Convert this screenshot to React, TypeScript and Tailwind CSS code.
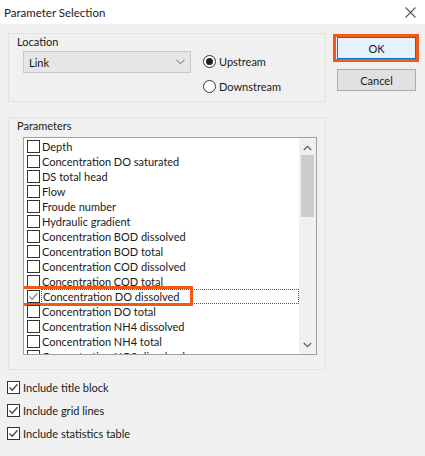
import React from "react";

const params = [
  "Depth",
  "Concentration DO saturated",
  "DS total head",
  "Flow",
  "Froude number",
  "Hydraulic gradient",
  "Concentration BOD dissolved",
  "Concentration BOD total",
  "Concentration COD dissolved",
  "Concentration COD total",
  "Concentration DO dissolved",
  "Concentration DO total",
  "Concentration NH4 dissolved",
  "Concentration NH4 total",
  "Concentration NO3 dissolved",
];

function CheckBox({ checked, dim }: { checked?: boolean; dim?: boolean }) {
  return (
    <span className="flex h-[13px] w-[13px] shrink-0 items-center justify-center border border-[#333] bg-white">
      {checked && (
        <svg width="11" height="11" viewBox="0 0 11 11">
          <path d="M1.5 5.5 L4.2 8.2 L9.5 2.2" fill="none" stroke={dim ? "#8a8a8a" : "#444"} strokeWidth="1.3" />
        </svg>
      )}
    </span>
  );
}

function Radio({ checked }: { checked?: boolean }) {
  return (
    <span className="flex h-[13px] w-[13px] shrink-0 items-center justify-center rounded-full border border-[#333] bg-white">
      {checked && <span className="h-[7px] w-[7px] rounded-full bg-[#222]" />}
    </span>
  );
}

export default function App() {
  return (
    <div
      className="h-[456px] w-[425px] overflow-hidden bg-[#f0f0f0] text-[11px] leading-[15px] text-[#1a1a1a]"
      style={{ fontFamily: "Lato, 'Noto Sans', sans-serif" }}
    >
      <div className="flex h-[24px] items-center justify-between bg-white pl-[4px] pr-[9px]">
        <span className="text-[11.5px]">Parameter Selection</span>
        <svg width="11" height="11" viewBox="0 0 11 11">
          <path d="M0.5 0.5 L10.5 10.5 M10.5 0.5 L0.5 10.5" stroke="#555" strokeWidth="1.1" />
        </svg>
      </div>

      <div className="flex">
        <div className="ml-[8px] w-[318px]">
          <div className="mt-[9px] h-[69px] border border-[#e2e2e2] pl-[8px]">
            <div>Location</div>
            <div className="mt-[2px] flex items-start">
              <div className="ml-[6px] flex h-[22px] w-[168px] items-center justify-between border border-[#c8c8c8] bg-[#e6e6e6] pl-[5px] pr-[5px]">
                <span>Link</span>
                <svg width="9" height="6" viewBox="0 0 9 6">
                  <path d="M0.5 0.8 L4.5 4.8 L8.5 0.8" fill="none" stroke="#666" strokeWidth="1" />
                </svg>
              </div>
              <div className="ml-[12px] flex flex-col gap-[10px] pt-[3px]">
                <label className="flex items-center gap-[3px]">
                  <Radio checked />
                  <span>Upstream</span>
                </label>
                <label className="flex items-center gap-[3px]">
                  <Radio />
                  <span>Downstream</span>
                </label>
              </div>
            </div>
          </div>

          <div className="mt-[15px] h-[253px] border border-[#e2e2e2] pl-[8px]">
            <div>Parameters</div>
            <div className="ml-[6px] mt-[4px] flex h-[218px] w-[294px] border border-[#a0a0a0] bg-white">
              <div className="flex-1 overflow-hidden pt-[1px]">
                {params.map((p) => {
                  const sel = p === "Concentration DO dissolved";
                  return (
                    <div key={p} className="relative flex h-[15px] items-center pl-[3px]">
                      <CheckBox checked={sel} dim />
                      <span
                        className={
                          sel
                            ? "ml-[1px] h-[15px] w-[259px] whitespace-nowrap border border-dotted border-[#555] pl-[1px] leading-[13px]"
                            : "ml-[2px] whitespace-nowrap"
                        }
                      >
                        {p}
                      </span>
                      {sel && (
                        <span className="pointer-events-none absolute left-[-3px] top-[-3px] h-[20px] w-[172px] border-[3px] border-[#f05a14]" />
                      )}
                    </div>
                  );
                })}
              </div>
              <div className="flex w-[17px] flex-col items-center bg-[#f0f0f0]">
                <svg className="mt-[7px]" width="9" height="6" viewBox="0 0 9 6">
                  <path d="M0.8 5 L4.5 1.3 L8.2 5" fill="none" stroke="#606060" strokeWidth="1.3" />
                </svg>
                <div className="mt-[4px] h-[62px] w-[13px] bg-[#cdcdcd]" />
                <div className="flex-1" />
                <svg className="mb-[6px]" width="9" height="6" viewBox="0 0 9 6">
                  <path d="M0.8 1 L4.5 4.7 L8.2 1" fill="none" stroke="#606060" strokeWidth="1.3" />
                </svg>
              </div>
            </div>
          </div>

          <div className="ml-[-1px] mt-[10px] flex flex-col gap-[8px]">
            <label className="flex items-center gap-[3px]">
              <CheckBox checked />
              <span>Include title block</span>
            </label>
            <label className="flex items-center gap-[3px]">
              <CheckBox checked />
              <span>Include grid lines</span>
            </label>
            <label className="flex items-center gap-[3px]">
              <CheckBox checked />
              <span>Include statistics table</span>
            </label>
          </div>
        </div>

        <div className="ml-[11px] mt-[13px] flex w-[79px] flex-col">
          <div className="relative">
            <button className="h-[22px] w-[79px] border border-[#0078d7] bg-[#e5f1fb]">OK</button>
            <span className="pointer-events-none absolute left-[-4px] top-[-3px] h-[28px] w-[86px] border-[3px] border-[#f05a14]" />
          </div>
          <button className="mt-[10px] h-[22px] w-[79px] border border-[#adadad] bg-[#e1e1e1]">Cancel</button>
        </div>
      </div>
    </div>
  );
}
